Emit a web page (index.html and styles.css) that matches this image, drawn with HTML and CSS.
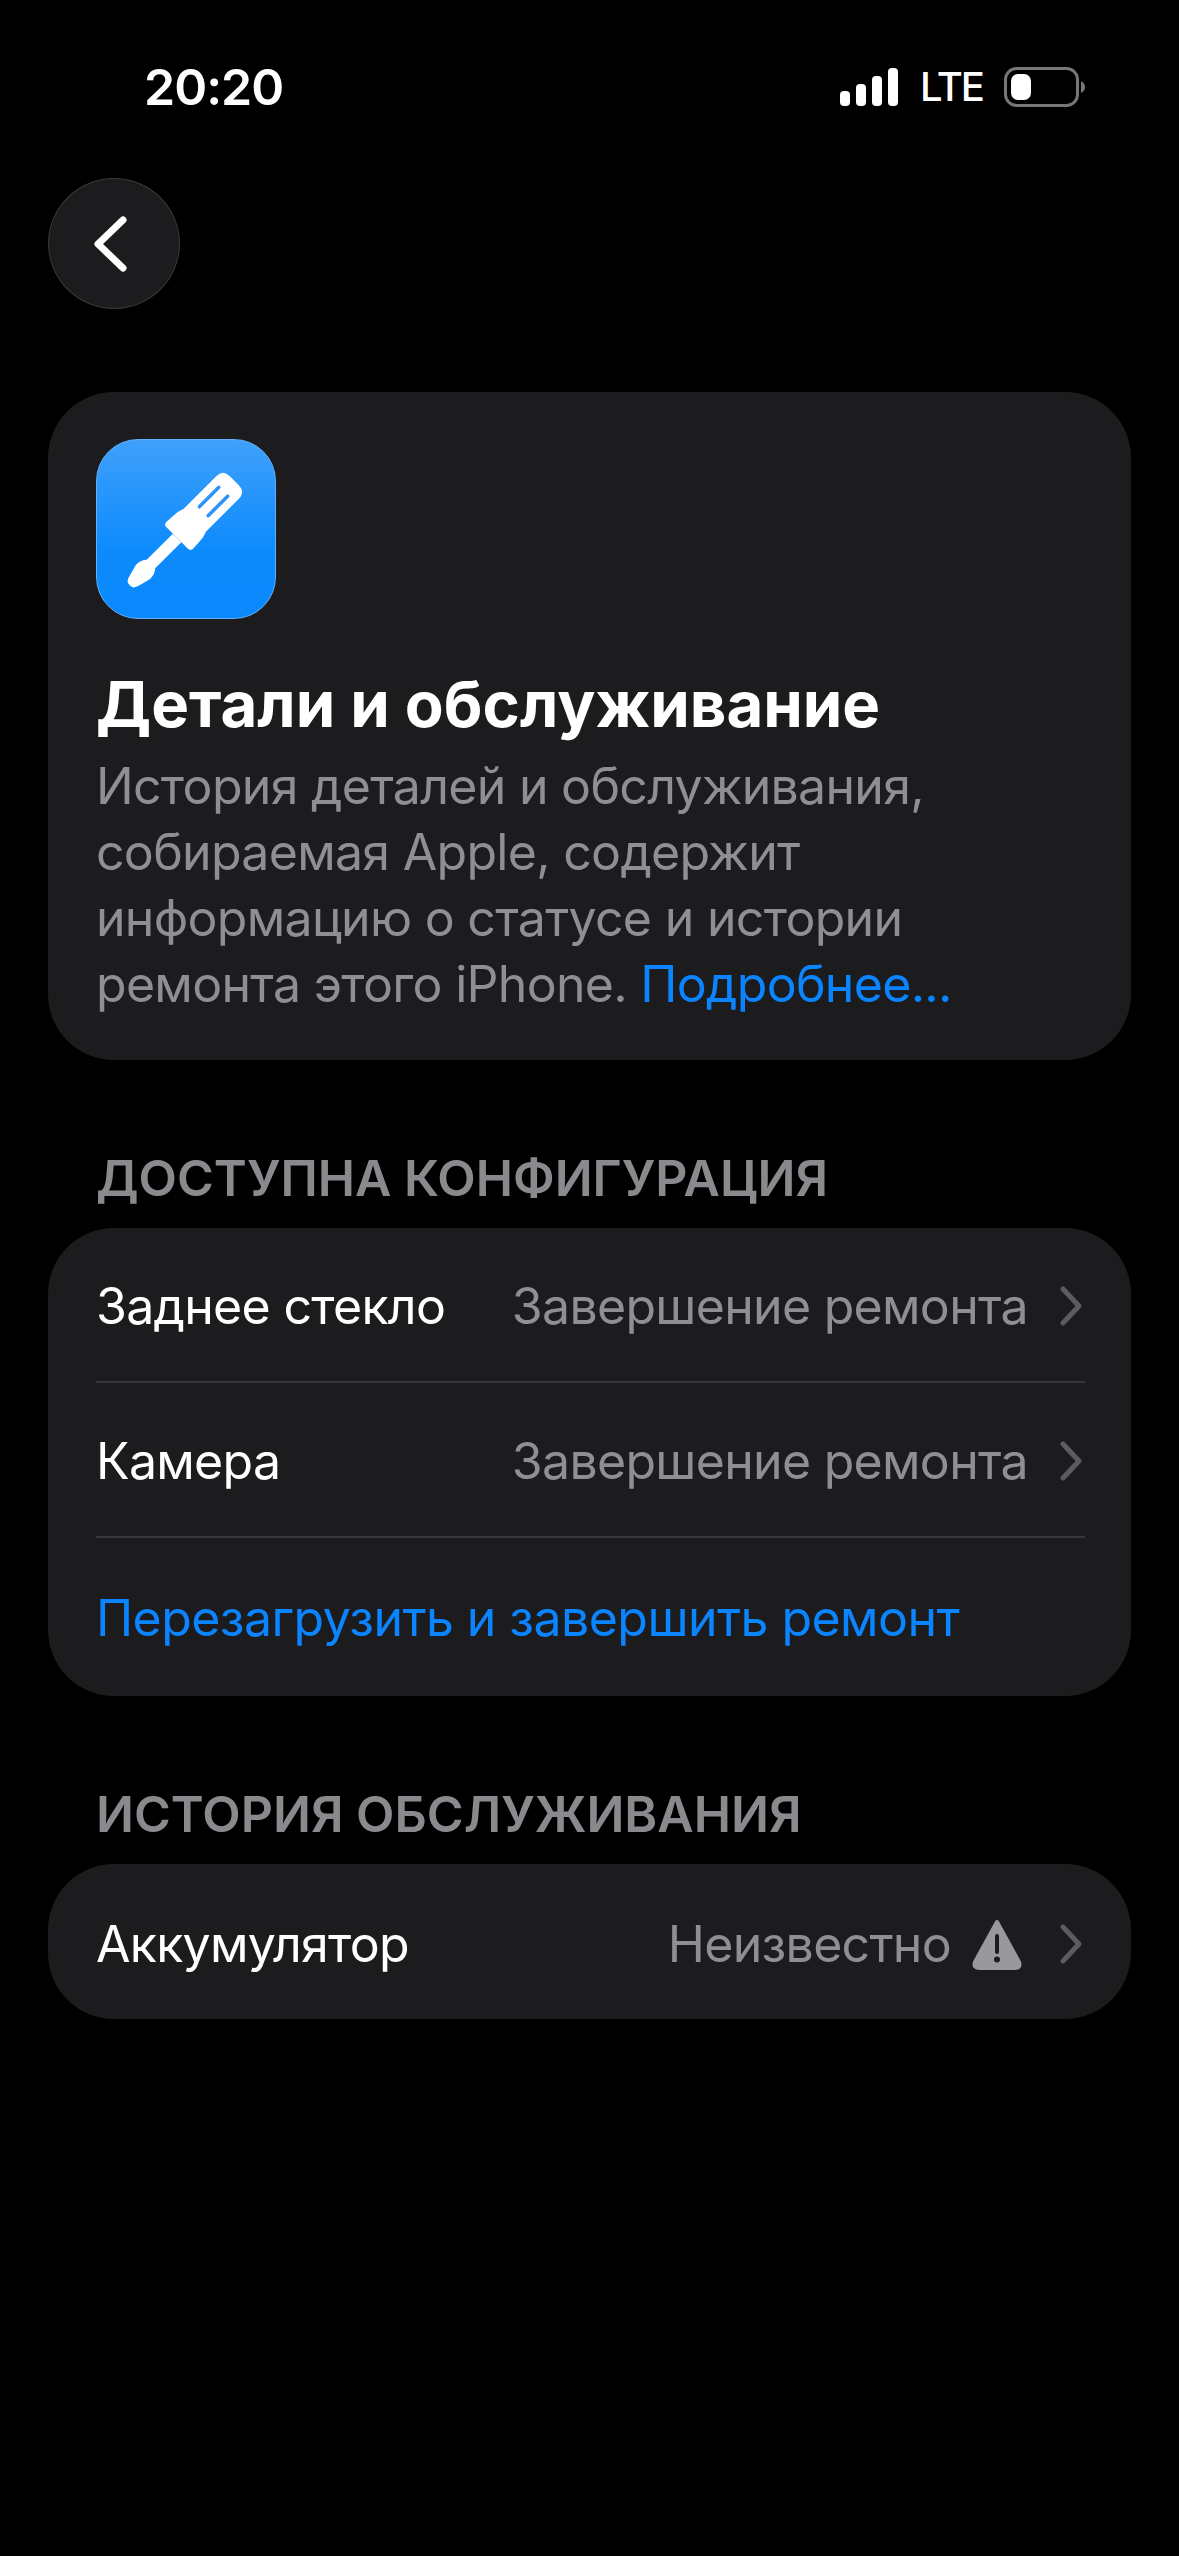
FILE: index.html
```html
<!DOCTYPE html>
<html>
    <head>
        <meta charset="utf-8">
        <meta name="viewport" content="width=device-width, initial-scale=1">
        <title>Детали и обслуживание</title>
        <link rel="stylesheet" href="styles.css">
    </head>
    <body>
        <div class="status">
            <span class="time">20:20</span>
            <div class="status-right">
                <svg class="signal" width="58" height="38" viewBox="0 0 58 38">
                    <rect x="0" y="23" width="10" height="15" rx="4" fill="#fff"/>
                    <rect x="16" y="16" width="10" height="22" rx="4" fill="#fff"/>
                    <rect x="32" y="8" width="10" height="30" rx="4" fill="#fff"/>
                    <rect x="48" y="0" width="10" height="38" rx="4" fill="#fff"/>
                </svg>
                <span class="lte">LTE</span>
                <svg class="battery" width="82" height="40" viewBox="0 0 82 40">
                    <rect x="1.5" y="1.5" width="72" height="37" rx="11" fill="none" stroke="#77777a" stroke-width="3"/>
                    <rect x="7" y="7" width="20" height="26" rx="7" fill="#fff"/>
                    <path d="M77 14 Q81 16 81 20 Q81 24 77 26 Z" fill="#77777a"/>
                </svg>
            </div>
        </div>

        <button class="back">
            <svg width="36" height="56" viewBox="0 0 36 56">
                <path d="M31 4 L6 28 L31 52" fill="none" stroke="#fff" stroke-width="7" stroke-linecap="round" stroke-linejoin="round"/>
            </svg>
        </button>

        <section class="card intro">
            <div class="app-icon">
                <svg width="180" height="180" viewBox="0 0 180 180">
                    <g transform="translate(33 147) rotate(-45)">
                        <path d="M2 -4 Q4 -6 8 -7 L20 -10 Q27 -10 31 -6 L68 -6 L68 6 L31 6 Q27 10 20 10 L8 7 Q4 6 2 4 Q0 0 2 -4 Z" fill="#fff"/>
                        <path d="M68 -15 Q68 -19 72 -19 L86 -18 Q90 -17 93 -16 L139 -16 Q149 -16 149 -6 L149 6 Q149 16 139 16 L93 16 Q90 17 86 18 L72 19 Q68 19 68 15 Z" fill="#fff"/>
                        <rect x="104" y="-8" width="31" height="3.5" rx="1.7" fill="#2f93f8"/>
                        <rect x="104" y="4.500" width="31" height="3.5" rx="1.7" fill="#2f93f8"/>
                    </g>
                </svg>
            </div>
            <h1>Детали и обслуживание</h1>
            <p>История деталей и обслуживания, собираемая Apple, содержит информацию о статусе и истории ремонта этого iPhone. <span class="link">Подробнее...</span></p>
        </section>

        <h2>ДОСТУПНА КОНФИГУРАЦИЯ</h2>
        <section class="card list">
            <div class="row">
                <span class="label">Заднее стекло</span>
                <span class="value">Завершение ремонта</span>
                <svg class="chev" width="22" height="40" viewBox="0 0 22 40"><path d="M3 3 L19 20 L3 37" fill="none" stroke="#5c5c60" stroke-width="5" stroke-linecap="round" stroke-linejoin="round"/></svg>
            </div>
            <div class="row">
                <span class="label">Камера</span>
                <span class="value">Завершение ремонта</span>
                <svg class="chev" width="22" height="40" viewBox="0 0 22 40"><path d="M3 3 L19 20 L3 37" fill="none" stroke="#5c5c60" stroke-width="5" stroke-linecap="round" stroke-linejoin="round"/></svg>
            </div>
            <div class="row">
                <span class="link">Перезагрузить и завершить ремонт</span>
            </div>
        </section>

        <h2>ИСТОРИЯ ОБСЛУЖИВАНИЯ</h2>
        <section class="card list">
            <div class="row">
                <span class="label">Аккумулятор</span>
                <span class="value">Неизвестно</span>
                <svg class="warn" width="52" height="52" viewBox="0 0 52 52">
                    <path d="M26 4 L48 44 Q50 50 44 50 L8 50 Q2 50 4 44 Z" fill="#98989d" stroke="#98989d" stroke-width="4" stroke-linejoin="round"/>
                    <rect x="24" y="16" width="4" height="20" rx="2" fill="#1c1c1e"/>
                    <circle cx="26" cy="41.500" r="3" fill="#1c1c1e"/>
                </svg>
                <svg class="chev" width="22" height="40" viewBox="0 0 22 40"><path d="M3 3 L19 20 L3 37" fill="none" stroke="#5c5c60" stroke-width="5" stroke-linecap="round" stroke-linejoin="round"/></svg>
            </div>
        </section>
    </body>
</html>
```

FILE: styles.css
```css
html{
    background-color: #000;
}
body{
    margin: 0;
    padding: 0 48px;
    height: 2556px;
    box-sizing: border-box;
    background-color: #000;
    color: #fff;
    font-family: Inter, "Noto Sans", sans-serif;
    overflow: hidden;
}
.status{
    display: flex;
    align-items: center;
    justify-content: space-between;
    height: 38px;
    padding: 68px 45px 0 96px;
}
.time{
    font-size: 50px;
    font-weight: 600;
    letter-spacing: -1px;
    line-height: 38px;
}
.status-right{
    display: flex;
    align-items: center;
}
.lte{
    font-size: 40px;
    font-weight: 500;
    letter-spacing: -2px;
    line-height: 38px;
    margin: 0 21px 0 22px;
}
.signal{
    display: block;
}
.battery{
    display: block;
}
.back{
    display: flex;
    align-items: center;
    justify-content: center;
    width: 132px;
    height: 131px;
    margin-top: 72px;
    padding: 0 8px 0 0;
    background-color: #1c1c1e;
    border: 1px solid #3a3a3c;
    border-radius: 50%;
}
.card{
    background-color: #1c1c1e;
    border-radius: 66px;
}
.intro{
    margin-top: 83px;
    padding: 47px 48px 43px;
}
.app-icon{
    width: 180px;
    height: 180px;
    box-sizing: border-box;
    border-radius: 42px;
    border: 1px solid #62b0fb;
    background: linear-gradient(#3fa0fb, #0d8bfd 62%, #0a89fd);
}
.app-icon svg{
    display: block;
    margin: -1px;
}
h1{
    margin: 46px 0 0;
    font-size: 63.500px;
    font-weight: 700;
    line-height: 78px;
}
.intro p{
    margin: 10px 0 0;
    font-size: 50px;
    letter-spacing: -0.7px;
    line-height: 66px;
    color: #8e8e93;
}
.link{
    color: #0a84ff;
}
h2{
    margin: 90px 48px 0;
    font-size: 50px;
    font-weight: 600;
    line-height: 56px;
    color: #8a8a8e;
}
h2 + .card{
    margin-top: 22px;
}
.list{
    padding: 0 46px 0 48px;
}
.row{
    display: flex;
    align-items: center;
    height: 151px;
    padding-top: 2px;
    font-size: 50px;
    letter-spacing: -0.7px;
    border-bottom: 2px solid #38383a;
}
.row .link{
    letter-spacing: -0.55px;
}
.row:last-child{
    height: 156px;
    border-bottom: none;
}
.list .row:only-child{
    height: 150px;
    padding-top: 5px;
}
.label{
    flex: 1;
}
.value{
    color: #8e8e93;
}
.warn{
    margin: 0 5px 0 20px;
}
.chev{
    margin: 0 3px 0 32px;
}
```
